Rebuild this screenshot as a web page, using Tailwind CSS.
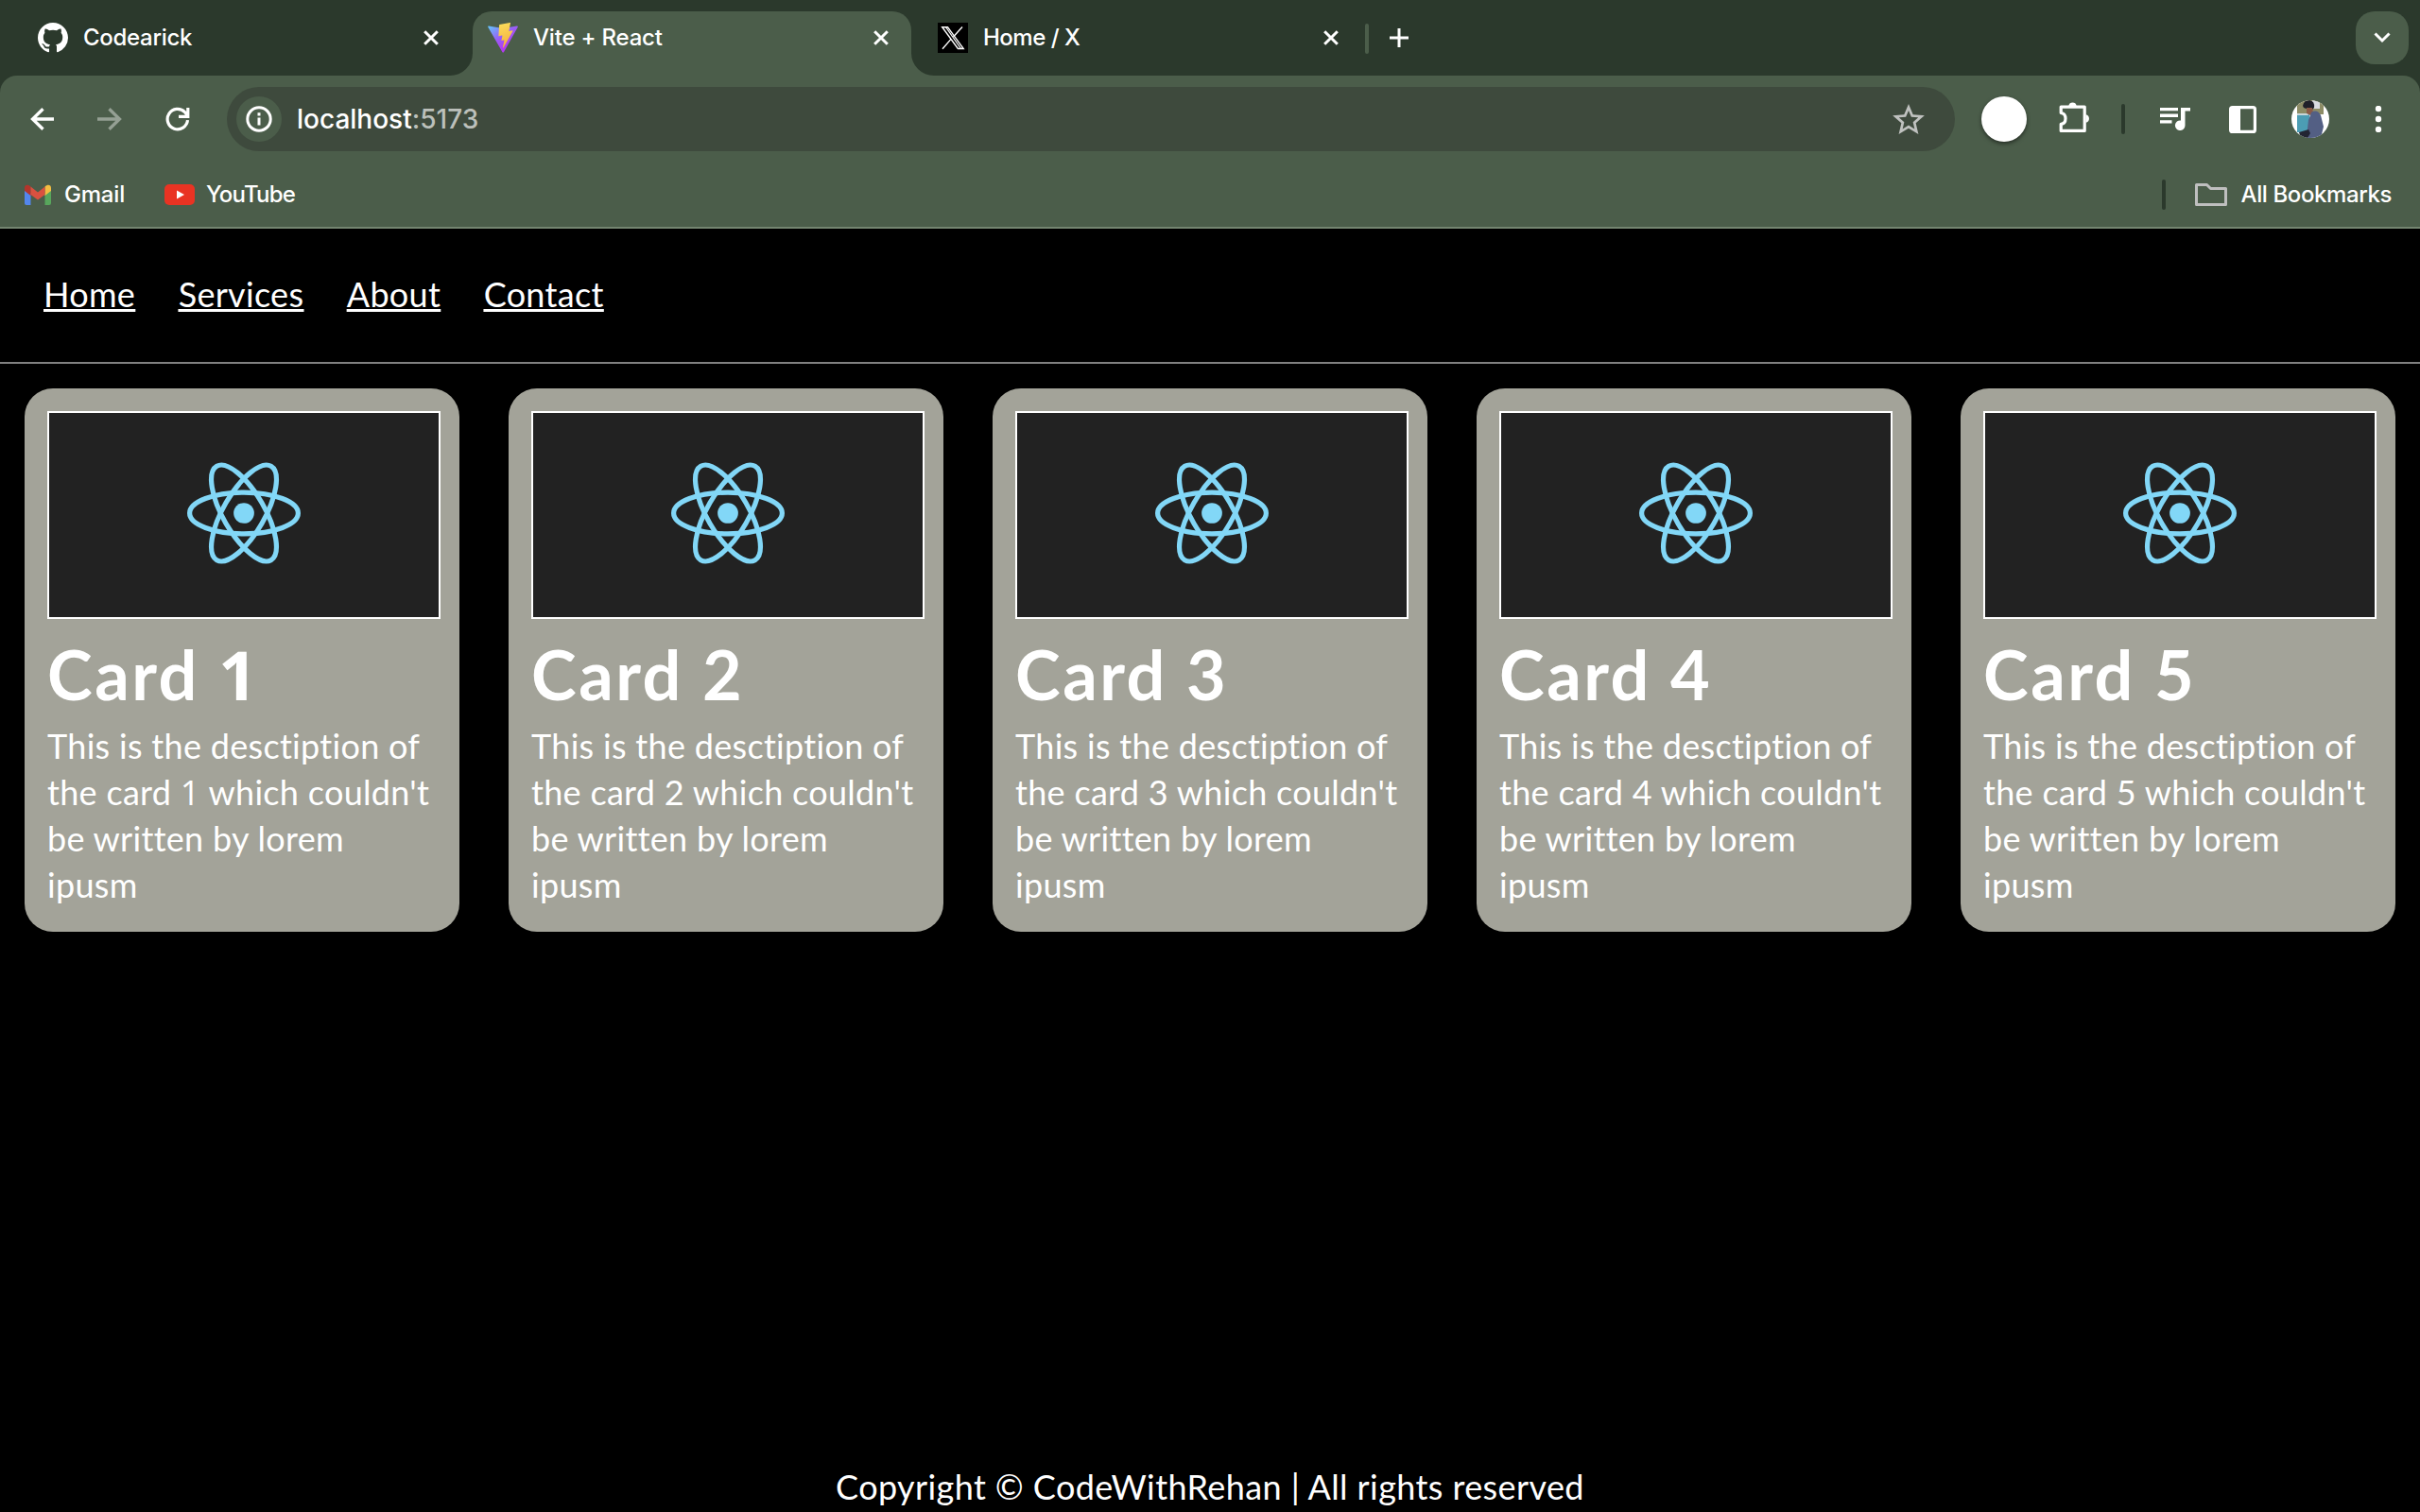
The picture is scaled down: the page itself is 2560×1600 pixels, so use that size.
<!DOCTYPE html>
<html lang="en">
<head>
<meta charset="utf-8">
<title>Vite + React</title>
<script src="https://cdn.jsdelivr.net/npm/@tailwindcss/browser@4"></script>
</head>
<body class="w-[2560px] h-[1600px] overflow-hidden bg-black text-white">
<div class="flex flex-col h-[1600px]">

  <!-- Browser chrome -->
  <div class="shrink-0 bg-[#2b392c] font-['Inter',sans-serif] font-[450] text-[24px]">
    <!-- Tab strip -->
    <div class="h-20 flex items-start">
      <div class="w-[500px] h-20 flex items-center pl-10 pr-9">
        <svg class="size-8" viewBox="0 0 16 16" fill="#fff"><path d="M8 0C3.58 0 0 3.58 0 8c0 3.54 2.29 6.53 5.47 7.59.4.07.55-.17.55-.38 0-.19-.01-.82-.01-1.49-2.01.37-2.53-.49-2.69-.94-.09-.23-.48-.94-.82-1.13-.28-.15-.68-.52-.01-.53.63-.01 1.08.58 1.23.82.72 1.21 1.87.87 2.33.66.07-.52.28-.87.51-1.07-1.78-.2-3.64-.89-3.64-3.95 0-.87.31-1.59.82-2.15-.08-.2-.36-1.02.08-2.12 0 0 .67-.21 2.2.82.64-.18 1.32-.27 2-.27s1.36.09 2 .27c1.53-1.04 2.2-.82 2.2-.82.44 1.1.16 1.92.08 2.12.51.56.82 1.27.82 2.15 0 3.07-1.87 3.75-3.65 3.95.29.25.54.73.54 1.48 0 1.07-.01 1.93-.01 2.2 0 .21.15.46.55.38A8.01 8.01 0 0 0 16 8c0-4.42-3.58-8-8-8z"/></svg>
        <span class="ml-4 tracking-[-0.3px]">Codearick</span>
        <svg class="size-4 ml-auto" viewBox="0 0 16 16" stroke="#fff" stroke-width="3"><path d="M1.2 1.2l13.6 13.6M14.8 1.2L1.2 14.8"/></svg>
      </div>
      <div class="relative w-[464px] h-[68px] mt-3 bg-[#4b5d4a] rounded-t-[20px] flex items-center pl-4 pr-6 pb-3">
        <svg class="absolute -left-6 bottom-0 size-6" viewBox="0 0 24 24" fill="#4b5d4a"><path d="M24 0v24H0A24 24 0 0 0 24 0z"/></svg>
        <svg class="absolute -right-6 bottom-0 size-6" viewBox="0 0 24 24" fill="#4b5d4a"><path d="M0 0v24h24A24 24 0 0 1 0 0z"/></svg>
        <svg class="size-8" viewBox="0 0 32 32">
          <defs>
            <linearGradient id="va" x1="0" y1="0" x2=".6" y2=".8"><stop offset="0" stop-color="#62c6fb"/><stop offset=".6" stop-color="#9a5cf5"/><stop offset="1" stop-color="#b23af0"/></linearGradient>
            <linearGradient id="vb" x1=".4" y1="0" x2=".6" y2="1"><stop offset="0" stop-color="#fbdc5a"/><stop offset="1" stop-color="#f3ab3c"/></linearGradient>
          </defs>
          <path fill="url(#va)" d="M31.7 4.7 16.9 31.2a.8.8 0 0 1-1.4 0L.3 4.7a.8.8 0 0 1 .8-1.2L16 6.1l14.800-2.600a.8.8 0 0 1 .9 1.200z"/>
          <path fill="url(#vb)" d="M23.4 0 12.4 2.1a.4.4 0 0 0-.3.4l-.7 11.400a.4.4 0 0 0 .5.4l3-.7a.4.4 0 0 1 .5.5l-.9 4.500a.4.4 0 0 0 .5.500l1.900-.6a.4.4 0 0 1 .5.5l-1.500 7c0 .5.500.7.8.300L26.400 8.900a.4.4 0 0 0-.4-.6l-3.200.600a.4.4 0 0 1-.4-.500L24 .5a.4.4 0 0 0-.6-.5z"/>
        </svg>
        <span class="ml-4 tracking-[-0.2px]">Vite + React</span>
        <svg class="size-4 ml-auto" viewBox="0 0 16 16" stroke="#fff" stroke-width="3"><path d="M1.2 1.2l13.6 13.6M14.8 1.2L1.2 14.8"/></svg>
      </div>
      <div class="w-[480px] h-20 flex items-center pl-7 pr-7">
        <svg class="size-8 bg-black" viewBox="0 0 32 32" fill="none" stroke="#fff"><path stroke-width="1.400" d="M4.700 4.700h5.800L27.200 27.500h-5.800zM26 4.500 16.500 15M13.800 17.600 5 27.700"/><path stroke-width="1.200" d="M8.500 4.700 24.500 27.500"/></svg>
        <span class="ml-4 tracking-[-0.5px]">Home / X</span>
        <svg class="size-4 ml-auto" viewBox="0 0 16 16" stroke="#fff" stroke-width="3"><path d="M1.2 1.2l13.6 13.6M14.8 1.2L1.2 14.8"/></svg>
      </div>
      <div class="h-20 flex items-center gap-[22px]">
        <div class="w-1 h-8 rounded-full bg-[#4b5d4a] mt-0.5"></div>
        <svg class="size-5" viewBox="0 0 20 20" stroke="#fff" stroke-width="3"><path d="M10 0v20M0 10h20"/></svg>
      </div>
      <div class="ml-auto mr-3 mt-3 size-14 rounded-[20px] bg-[#4b5d4a] flex items-center justify-center">
        <svg class="w-[18px] h-3" viewBox="0 0 18 12" fill="none" stroke="#fff" stroke-width="3"><path d="M1.500 1.500 9 9l7.500-7.500"/></svg>
      </div>
    </div>

    <!-- Toolbar -->
    <div class="h-[162px] bg-[#4b5d4a] rounded-t-[18px] border-b-2 border-[#748570] pt-3">
      <div class="h-[68px] flex items-center pl-8">
        <svg class="w-[26px] h-6" viewBox="0 0 26 24" fill="none" stroke="#fff" stroke-width="3.300"><path d="M25 12H3M13.500 1.200 2.500 12l11 10.800"/></svg>
        <svg class="w-[26px] h-6 ml-[45px]" viewBox="0 0 26 24" fill="none" stroke="#95a094" stroke-width="3.300"><path d="M0 12h22M12.500 1.200 23.500 12l-11 10.800"/></svg>
        <svg class="w-[26px] h-[26px] ml-[46px]" viewBox="0 0 26 26" fill="none" stroke="#fff" stroke-width="3.200"><path d="M23.500 14.200A10.700 10.700 0 1 1 20.500 5.600l3 4M23.800 1v9.400H14"/></svg>
        <div class="w-[1828px] h-[68px] ml-[39px] rounded-full bg-[#3e4a3d] flex items-center pl-2.5 pr-8">
          <div class="size-12 rounded-full bg-[#4b5d4a] flex items-center justify-center">
            <svg class="size-7" viewBox="0 0 28 28" fill="none" stroke="#fff" stroke-width="3"><circle cx="14" cy="14" r="12.200"/><path d="M14 12.500v8M14 7.300v3.200"/></svg>
          </div>
          <span class="ml-4 text-[28px]">localhost<span class="text-[#bcc0bb]">:5173</span></span>
          <svg class="w-[34px] h-8 ml-auto" viewBox="2 2 20 19" fill="#bfc1bf"><path d="M22 9.240l-7.190-.620L12 2 9.190 8.630 2 9.240l5.460 4.730L5.820 21 12 17.270 18.180 21l-1.630-7.030L22 9.240zM12 15.400l-3.760 2.270 1-4.280-3.320-2.880 4.380-.380L12 6.100l1.710 4.040 4.380.380-3.320 2.880 1 4.280L12 15.400z"/></svg>
        </div>
        <div class="size-12 ml-7 rounded-full bg-white shadow-[0_2px_4px_rgba(0,0,0,0.5)]"></div>
        <svg class="w-[34px] h-[34px] ml-[34px] -mt-1" viewBox="0 0 34 34" fill="none"><path stroke="#fff" stroke-width="3.200" stroke-linejoin="round" d="M2.200 12.500V6.100H27.200V31.400H2.200V24.300C5.500 24 7 21.500 7 18.500S5.500 13 2.200 12.500z"/><path fill="#fff" d="M10.300 5a4.300 4.300 0 0 1 8.400 0zM28.500 14.200a4.400 4.400 0 0 1 0 8.600z"/></svg>
        <div class="w-1 h-8 ml-[32px] rounded-full bg-[#2b392c]"></div>
        <svg class="w-8 h-6 ml-[37px]" viewBox="0 0 32 24" fill="#fff"><path d="M0 0h19v3.300H0zM0 6.600h19v3.300H0zM0 13.200h12.500v3.300H0zM22 0H32v3.500h-5.500V18.500a5.300 5.300 0 1 1-4.500-5z"/></svg>
        <svg class="w-[29px] h-[29px] ml-[41px]" viewBox="0 0 29 29"><rect x="1.600" y="1.600" width="25.800" height="25.800" rx="2" fill="none" stroke="#fff" stroke-width="3.200"/><path fill="#fff" d="M2 2h10v25H2z"/></svg>
        <svg class="size-10 ml-[37px] rounded-full" viewBox="0 0 40 40"><path fill="#fff" d="M0 0h40v40H0z"/><path fill="#8d8c66" d="M6 0h28v15H6z"/><path fill="#d9dbe2" d="M22 0h8v9h-8z"/><path fill="#4c9db4" d="M6 15h13v19H6z"/><path fill="#c9d6da" d="M6 14h12v2H6z"/><path fill="#20202a" d="M12 6q1-6 7-6 6 1 5 8l-3 3-8-3z"/><path fill="#8b5a47" d="M16 8h6l1 5-3 3-4-2z"/><path fill="#535f84" d="M21 13q6-4 10 3l3 12-3 12H17V30l1-9z"/><path fill="#232533" d="M8 34l10-3 2 4-3 5h-7z"/></svg>
        <svg class="w-2 h-7 ml-[48px]" viewBox="0 0 8 28" fill="#fff"><circle cx="4" cy="3" r="3.200"/><circle cx="4" cy="14" r="3.200"/><circle cx="4" cy="25" r="3.200"/></svg>
      </div>

      <!-- Bookmarks bar -->
      <div class="h-[68px] mt-3 flex items-center pl-[26px] pr-[30px]">
        <svg class="w-7 h-[22px]" viewBox="0 0 28 22"><path fill="#5386ec" d="M0 5l6.500 4.500V22H2a2 2 0 0 1-2-2z"/><path fill="#58a65c" d="M28 5l-6.500 4.500V22H26a2 2 0 0 0 2-2z"/><path fill="#f2bd42" d="M21.500 2.500C24 0 28 0 28 4v3l-6.500 5z"/><path fill="#b3352b" d="M6.500 2.500C4 0 0 0 0 4v3l6.500 5z"/><path fill="#d95140" d="M6.500 2.500 14 8.500l7.500-6V11L14 16.500 6.500 11z"/></svg>
        <span class="w-16 ml-3.5 tracking-[-0.2px]">Gmail</span>
        <svg class="w-8 h-[22px] ml-[42px]" viewBox="0 0 32 22"><rect width="32" height="22" rx="5" fill="#e93323"/><path fill="#fff" d="M13 6.500l8 4.500-8 4.500z"/></svg>
        <span class="ml-3 tracking-[-0.8px]">YouTube</span>
        <div class="w-1 h-8 ml-auto rounded-full bg-[#2b392c]"></div>
        <svg class="w-[34px] h-6 ml-[31px]" viewBox="0 0 34 24" fill="none" stroke="#bfbfbf" stroke-width="3" stroke-linejoin="round"><path d="M1.500 1.500h11l4 4h16v17h-31z"/></svg>
        <span class="ml-[15px] tracking-[-0.4px]">All Bookmarks</span>
      </div>
    </div>
  </div>

  <!-- Page -->
  <div class="flex-1 flex flex-col font-['Lato',sans-serif] text-[36px] leading-[49px] tracking-[0.4px]">
    <nav class="h-[143px] border-b-2 border-[#808080] pt-[45px] pl-[46px] flex gap-[45.500px] tracking-[0.3px] underline">
      <a>Home</a><a>Services</a><a>About</a><a>Contact</a>
    </nav>
    <main id="cards" class="flex gap-[52px] pt-[26px] pl-[26px]"></main>
    <footer class="mt-auto h-[51px] text-center">Copyright © CodeWithRehan | All rights reserved</footer>
  </div>
</div>

<script>
  // The first card's numeral uses a face whose "1" has no foot.
  const num = n => n === 1 ? `<span class="font-['Open_Sans',sans-serif] leading-none">1</span>` : n;
  const card = n => `
    <article class="w-[460px] h-[575px] shrink-0 rounded-[30px] bg-[#a3a399] pt-6 pl-6">
      <div class="w-[416px] h-[220px] border-2 border-white bg-[#222] flex justify-center pt-[52px]">
        <svg class="w-[120px] h-[108px]" viewBox="-11.5 -10.35 23 20.7" fill="none" stroke="#82d7f7">
          <circle r="2.080" fill="#82d7f7" stroke="none"/>
          <ellipse rx="11" ry="4.200"/><ellipse rx="11" ry="4.200" transform="rotate(60)"/><ellipse rx="11" ry="4.200" transform="rotate(120)"/>
        </svg>
      </div>
      <h1 class="mt-[18px] h-20 text-[72px] leading-[80px] tracking-[2.5px] font-bold">Card ${num(n)}</h1>
      <p class="mt-3 tracking-[0.3px]">This is the desctiption of<br>the card ${num(n)} which couldn't<br>be written by lorem<br>ipusm</p>
    </article>`;
  document.getElementById('cards').innerHTML = [1, 2, 3, 4, 5].map(card).join('');
</script>
</body>
</html>
